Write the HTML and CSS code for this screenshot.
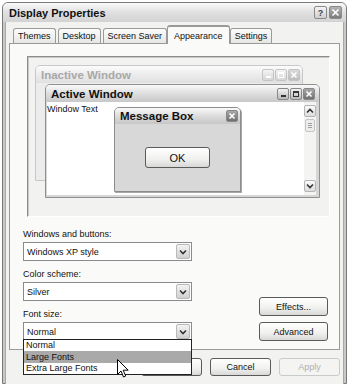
FILE: index.html
```html
<!DOCTYPE html>
<html lang="en">
<head>
  <meta charset="UTF-8" />
  <title>Display Properties</title>
  <link rel="stylesheet" href="styles.css">
</head>
<body>

  <div class="window">
    <div class="titlebar">
      <span class="title">Display Properties</span>
      <div class="caption-btns">
        <span class="cbtn help">?</span>
        <span class="cbtn close">
          <svg width="9" height="9" viewBox="0 0 9 9"><path d="M1.5 1.5l6 6M7.5 1.5l-6 6" stroke="#fff" stroke-width="1.6"/></svg>
        </span>
      </div>
    </div>

    <div class="client">
      <div class="tabs">
        <span class="tab">Themes</span>
        <span class="tab">Desktop</span>
        <span class="tab">Screen Saver</span>
        <span class="tab active">Appearance</span>
        <span class="tab">Settings</span>
      </div>

      <div class="panel">
        <div class="preview">
          <div class="pwin inactive">
            <div class="pwin-title">
              <span>Inactive Window</span>
              <div class="wbtns">
                <span class="wbtn"><i class="min"></i></span>
                <span class="wbtn"><i class="max"></i></span>
                <span class="wbtn x">
                  <svg width="8" height="8" viewBox="0 0 8 8"><path d="M1.5 1.5l5 5M6.5 1.5l-5 5" stroke="#fff" stroke-width="1.6"/></svg>
                </span>
              </div>
            </div>
          </div>

          <div class="pwin active">
            <div class="pwin-title">
              <span>Active Window</span>
              <div class="wbtns">
                <span class="wbtn"><i class="min"></i></span>
                <span class="wbtn"><i class="max"></i></span>
                <span class="wbtn x">
                  <svg width="8" height="8" viewBox="0 0 8 8"><path d="M1.5 1.5l5 5M6.5 1.5l-5 5" stroke="#fff" stroke-width="1.6"/></svg>
                </span>
              </div>
            </div>
            <div class="pwin-body">
              <div class="pwin-text">Window Text</div>
              <div class="scrollbar">
                <span class="sbtn">
                  <svg width="8" height="6" viewBox="0 0 8 6"><path d="M1 4.5l3-3 3 3" fill="none" stroke="#333" stroke-width="1.6"/></svg>
                </span>
                <span class="thumb"><i></i><i></i><i></i></span>
                <span class="track"></span>
                <span class="sbtn">
                  <svg width="8" height="6" viewBox="0 0 8 6"><path d="M1 1.5l3 3 3-3" fill="none" stroke="#333" stroke-width="1.6"/></svg>
                </span>
              </div>
            </div>
          </div>

          <div class="msgbox">
            <div class="msg-title">
              <span>Message Box</span>
              <span class="wbtn x">
                <svg width="8" height="8" viewBox="0 0 8 8"><path d="M1.5 1.5l5 5M6.5 1.5l-5 5" stroke="#fff" stroke-width="1.6"/></svg>
              </span>
            </div>
            <div class="msg-body">
              <span class="btn msg-ok">OK</span>
            </div>
          </div>
        </div>

        <div class="form">
          <div class="fields">
            <div class="field">
              <label>Windows and buttons:</label>
              <div class="select">
                <span>Windows XP style</span>
                <span class="drop">
                  <svg width="8" height="6" viewBox="0 0 8 6"><path d="M1 1.5l3 3 3-3" fill="none" stroke="#333" stroke-width="1.6"/></svg>
                </span>
              </div>
            </div>
            <div class="field">
              <label>Color scheme:</label>
              <div class="select">
                <span>Silver</span>
                <span class="drop">
                  <svg width="8" height="6" viewBox="0 0 8 6"><path d="M1 1.5l3 3 3-3" fill="none" stroke="#333" stroke-width="1.6"/></svg>
                </span>
              </div>
            </div>
            <div class="field font-field">
              <label>Font size:</label>
              <div class="select">
                <span>Normal</span>
                <span class="drop">
                  <svg width="8" height="6" viewBox="0 0 8 6"><path d="M1 1.5l3 3 3-3" fill="none" stroke="#333" stroke-width="1.6"/></svg>
                </span>
              </div>
              <ul class="listbox">
                <li>Normal</li>
                <li class="hl">Large Fonts</li>
                <li>Extra Large Fonts</li>
              </ul>
            </div>
          </div>
          <div class="side-btns">
            <span class="btn">Effects...</span>
            <span class="btn">Advanced</span>
          </div>
        </div>
      </div>

      <div class="dialog-btns">
        <span class="btn">OK</span>
        <span class="btn">Cancel</span>
        <span class="btn disabled">Apply</span>
      </div>
    </div>
  </div>

  <svg class="cursor" width="12" height="19" viewBox="0 0 12 19">
    <path d="M0.5 0.5v15l3.5-3.5 2.5 6 2.2-1-2.5-5.8h5z" fill="#fff" stroke="#000" stroke-width="1"/>
  </svg>

</body>
</html>
```

FILE: styles.css
```css
body {
  margin: 0;
  background: #fff;
  font-family: 'Liberation Sans', Arial, sans-serif;
  font-size: 9px;
  color: #111;
}
.window {
  position: relative;
  margin: 2px 0 0 2px;
  width: 345px;
  height: 382px;
  box-sizing: border-box;
  border: 1px solid #7a7a7a;
  border-radius: 6px 6px 0 0;
  background: #c8c8c8;
}
.titlebar {
  height: 19px;
  padding: 0 4px 0 6px;
  display: flex;
  align-items: center;
  justify-content: space-between;
  background: linear-gradient(#fafafa, #e2e2e2 45%, #d2d2d2);
  border-radius: 5px 5px 0 0;
}
.title {
  font-size: 11px;
  font-weight: bold;
  color: #111;
}
.caption-btns {
  display: flex;
  gap: 2px;
}
.cbtn {
  width: 11px;
  height: 11px;
  border: 1px solid #8a8a8a;
  border-radius: 2px;
  display: flex;
  align-items: center;
  justify-content: center;
  font-size: 9px;
  font-weight: bold;
}
.cbtn.help {
  background: linear-gradient(#f4f4f4, #cfcfcf);
  color: #444;
}
.cbtn.close {
  background: linear-gradient(#b4b4b4, #7c7c7c);
}
.client {
  height: 361px;
  padding: 3px 0 0 3px;
  margin: 0 2px;
  background: #f2f2f0;
  border-left: 1px solid #a8a8a8;
  border-right: 1px solid #a8a8a8;
}
.tabs {
  height: 18px;
  padding-left: 4px;
  display: flex;
  align-items: flex-end;
  gap: 2px;
  position: relative;
  z-index: 1;
}
.tab {
  height: 15px;
  padding: 0 4px;
  box-sizing: border-box;
  display: flex;
  align-items: center;
  border: 1px solid #9a9a9a;
  border-bottom: none;
  border-radius: 3px 3px 0 0;
  background: linear-gradient(#fcfcfc, #e6e6e4);
}
.tab.active {
  height: 19px;
  margin: 0 -2px -1px;
  padding: 0 6px;
  background: #fafaf8;
  border-top: 2px solid #9a9a9a;
}
.panel {
  width: 331px;
  height: 307px;
  box-sizing: border-box;
  border: 1px solid #9a9a9a;
  background: #fafaf8;
}
.preview {
  position: relative;
  margin: 12px 0 0 17px;
  width: 303px;
  height: 161px;
  box-sizing: border-box;
  border: 1px solid #8c8c8c;
  border-right-color: #fff;
  border-bottom-color: #fff;
  box-shadow: inset 1px 1px 0 #c8c8c8;
  background: #f2f2f0;
}
.pwin {
  position: absolute;
  box-sizing: border-box;
  border: 1px solid #909090;
  border-radius: 5px 5px 0 0;
  background: #d6d6d6;
}
.pwin.inactive {
  left: 7px;
  top: 8px;
  width: 268px;
  height: 116px;
  border-color: #c8c8c8;
  background: #ececec;
}
.pwin.active {
  left: 17px;
  top: 27px;
  width: 275px;
  height: 114px;
  padding: 0 3px 2px 1px;
  display: flex;
  flex-direction: column;
}
.pwin-title {
  height: 17px;
  padding: 0 2px 0 5px;
  display: flex;
  align-items: center;
  justify-content: space-between;
  font-size: 11.5px;
  font-weight: bold;
  background: linear-gradient(#fafafa, #dedede 50%, #c8c8c8);
  border-radius: 4px 4px 0 0;
}
.pwin.active .pwin-title {
  margin: 0 -3px 0 -1px;
  padding-right: 4px;
}
.inactive .pwin-title {
  color: #a8a8a8;
  background: linear-gradient(#fcfcfc, #ececec 50%, #e0e0e0);
}
.wbtns {
  display: flex;
  gap: 1px;
}
.wbtn {
  width: 12px;
  height: 12px;
  box-sizing: border-box;
  border: 1px solid #888;
  border-radius: 2px;
  background: linear-gradient(#f2f2f2, #b8b8b8);
  display: flex;
  align-items: center;
  justify-content: center;
  position: relative;
}
.wbtn.x {
  background: linear-gradient(#a8a8a8, #707070);
}
.inactive .wbtn {
  border-color: #c4c4c4;
  background: linear-gradient(#f4f4f4, #d6d6d6);
}
.inactive .wbtn.x {
  background: linear-gradient(#dadada, #bcbcbc);
}
.wbtn .min {
  position: absolute;
  left: 3px;
  bottom: 2px;
  width: 5px;
  height: 2px;
  background: #333;
}
.wbtn .max {
  width: 4px;
  height: 3px;
  border: 1px solid #333;
  border-top-width: 2px;
}
.inactive .wbtn .min {
  background: #fff;
}
.inactive .wbtn .max {
  border-color: #fff;
}
.pwin-body {
  flex: 1;
  display: flex;
  background: #fff;
}
.pwin-text {
  flex: 1;
  padding: 2px 0 0 0;
  line-height: 10px;
}
.scrollbar {
  width: 12px;
  padding: 3px 0 3px;
  display: flex;
  flex-direction: column;
  align-items: center;
  gap: 2px;
  background: #f4f4f2;
}
.sbtn {
  width: 12px;
  height: 12px;
  box-sizing: border-box;
  border: 1px solid #b4b4b4;
  border-radius: 2px;
  background: linear-gradient(#fafafa, #dcdcdc);
  display: flex;
  align-items: center;
  justify-content: center;
}
.thumb {
  width: 10px;
  height: 13px;
  box-sizing: border-box;
  border: 1px solid #c4c4c4;
  border-radius: 2px;
  background: #ececec;
  display: flex;
  flex-direction: column;
  align-items: center;
  justify-content: center;
  gap: 1px;
}
.thumb i {
  width: 4px;
  height: 1px;
  background: #a0a0a0;
}
.track {
  flex: 1;
}
.msgbox {
  position: absolute;
  left: 86px;
  top: 50px;
  width: 127px;
  height: 85px;
  box-sizing: border-box;
  border: 1px solid #8c8c8c;
  border-radius: 5px 5px 0 0;
  background: #d8d8d8;
  box-shadow: 1px 1px 0 #a8a8a8;
  display: flex;
  flex-direction: column;
}
.msg-title {
  height: 16px;
  padding: 0 2px 0 5px;
  display: flex;
  align-items: center;
  justify-content: space-between;
  font-size: 11.5px;
  font-weight: bold;
  background: linear-gradient(#fafafa, #dcdcdc 50%, #c6c6c6);
  border-radius: 4px 4px 0 0;
}
.msg-body {
  flex: 1;
  padding: 23px 0 0 30px;
}
.btn {
  height: 18px;
  box-sizing: border-box;
  border: 1px solid #5a5a5a;
  border-radius: 3px;
  background: linear-gradient(#ffffff, #f0f0ee 60%, #d8d8d6);
  display: flex;
  align-items: center;
  justify-content: center;
}
.btn.msg-ok {
  width: 65px;
  height: 21px;
  font-size: 11px;
}
.form {
  margin: 12px 0 0 13px;
  display: flex;
  align-items: flex-end;
}
.fields {
  width: 169px;
  display: flex;
  flex-direction: column;
  gap: 8px;
}
.field label {
  display: block;
  line-height: 11px;
  margin-bottom: 2px;
}
.font-field {
  position: relative;
}
.select {
  height: 19px;
  box-sizing: border-box;
  border: 1px solid #8a8a8a;
  background: #fff;
  display: flex;
  align-items: center;
  justify-content: space-between;
  padding: 0 1px 0 3px;
}
.drop {
  width: 14px;
  height: 15px;
  box-sizing: border-box;
  border: 1px solid #b8b8b8;
  border-radius: 2px;
  background: linear-gradient(#f4f4f4, #d0d0d0);
  display: flex;
  align-items: center;
  justify-content: center;
}
.listbox {
  position: absolute;
  left: 0;
  top: 30px;
  width: 169px;
  margin: 0;
  padding: 0;
  list-style: none;
  box-sizing: border-box;
  border: 1px solid #222;
  background: #fff;
  z-index: 2;
}
.listbox li {
  height: 11px;
  line-height: 11px;
  padding-left: 2px;
}
.listbox li.hl {
  height: 12px;
  line-height: 12px;
  background: #a9a9a9;
}
.side-btns {
  margin-left: 67px;
  display: flex;
  flex-direction: column;
  gap: 6px;
}
.side-btns .btn {
  width: 69px;
  height: 19px;
}
.dialog-btns {
  margin-top: 8px;
  padding-right: 3px;
  display: flex;
  justify-content: flex-end;
  gap: 8px;
}
.dialog-btns .btn {
  width: 61px;
}
.btn.disabled {
  color: #b0b0b0;
  border-color: #cacaca;
  background: #f4f4f2;
}
.cursor {
  position: absolute;
  left: 117px;
  top: 359px;
  z-index: 3;
}
```
